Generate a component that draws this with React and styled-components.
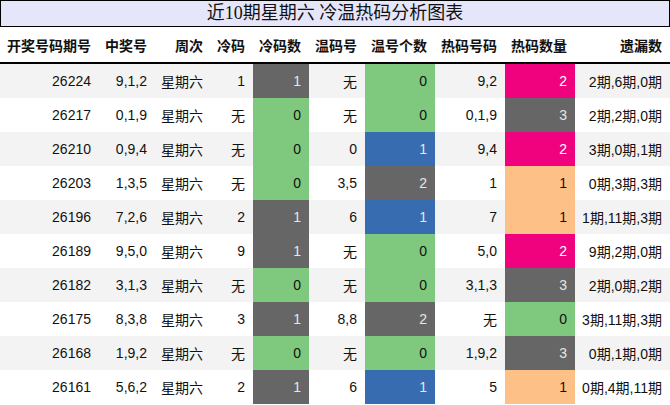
import React from "react";
import styled, { createGlobalStyle } from "styled-components";

const GlobalStyle = createGlobalStyle`
  html, body { margin: 0; padding: 0; background: #fff; }
  body { font-family: "Liberation Sans", "Noto Sans CJK SC", sans-serif; }
`;

const Wrap = styled.div`
  width: 670px;
`;

const Title = styled.div`
  height: 25px;
  border: 1px solid #000;
  background: #e6e6fa;
  font-family: "Liberation Serif", "Noto Sans CJK SC", serif;
  font-size: 18px;
  line-height: 25px;
  text-align: center;
  color: #111;
`;

const Table = styled.table`
  width: 670px;
  border-collapse: collapse;
  table-layout: fixed;
  font-size: 14px;
  color: #111;
`;

const Th = styled.th`
  height: 35px;
  padding: 0 8px 0 0;
  text-align: right;
  font-weight: bold;
  font-size: 14px;
  border-bottom: 2px solid #000;
  white-space: nowrap;
`;

const Row = styled.tr`
  height: 34px;
  background: ${(p) => (p.$odd ? "#f3f3f3" : "#fff")};
`;

const Td = styled.td`
  height: 34px;
  padding: 0 8px 0 0;
  text-align: right;
  white-space: nowrap;
  background: ${(p) => p.$bg || "transparent"};
  color: ${(p) => p.$fg || "#111"};
`;

const swatch = {
  green: { bg: "#7fc97f", fg: "#111" },
  gray: { bg: "#666666", fg: "#e6e6e6" },
  blue: { bg: "#386cb0", fg: "#e6e6e6" },
  pink: { bg: "#f0027f", fg: "#fff" },
  orange: { bg: "#fdc086", fg: "#111" },
};

const coldColor = { 0: "green", 1: "gray" };
const warmColor = { 0: "green", 1: "blue", 2: "gray" };
const hotColor = { 0: "green", 1: "orange", 2: "pink", 3: "gray" };

const cols = [
  ["开奖号码期号", 99],
  ["中奖号", 56],
  ["周次", 56],
  ["冷码", 42],
  ["冷码数", 56],
  ["温码号", 56],
  ["温号个数", 70],
  ["热码号码", 70],
  ["热码数量", 70],
  ["遗漏数", 95],
];

const rows = [
  ["26224", "9,1,2", "1", 1, "无", 0, "9,2", 2, "2期,6期,0期"],
  ["26217", "0,1,9", "无", 0, "无", 0, "0,1,9", 3, "2期,2期,0期"],
  ["26210", "0,9,4", "无", 0, "0", 1, "9,4", 2, "3期,0期,1期"],
  ["26203", "1,3,5", "无", 0, "3,5", 2, "1", 1, "0期,3期,3期"],
  ["26196", "7,2,6", "2", 1, "6", 1, "7", 1, "1期,11期,3期"],
  ["26189", "9,5,0", "9", 1, "无", 0, "5,0", 2, "9期,2期,0期"],
  ["26182", "3,1,3", "无", 0, "无", 0, "3,1,3", 3, "2期,0期,2期"],
  ["26175", "8,3,8", "3", 1, "8,8", 2, "无", 0, "3期,11期,3期"],
  ["26168", "1,9,2", "无", 0, "无", 0, "1,9,2", 3, "0期,1期,0期"],
  ["26161", "5,6,2", "2", 1, "6", 1, "5", 1, "0期,4期,11期"],
];

const Count = ({ value, map }) => {
  const s = swatch[map[value]];
  return (
    <Td $bg={s.bg} $fg={s.fg}>
      {value}
    </Td>
  );
};

export default function App() {
  return (
    <Wrap>
      <GlobalStyle />
      <Title>近10期星期六 冷温热码分析图表</Title>
      <Table>
        <colgroup>
          {cols.map(([name, w]) => (
            <col key={name} style={{ width: w }} />
          ))}
        </colgroup>
        <thead>
          <tr>
            {cols.map(([name]) => (
              <Th key={name}>{name}</Th>
            ))}
          </tr>
        </thead>
        <tbody>
          {rows.map((r, i) => (
            <Row key={r[0]} $odd={i % 2 === 0}>
              <Td>{r[0]}</Td>
              <Td>{r[1]}</Td>
              <Td>星期六</Td>
              <Td>{r[2]}</Td>
              <Count value={r[3]} map={coldColor} />
              <Td>{r[4]}</Td>
              <Count value={r[5]} map={warmColor} />
              <Td>{r[6]}</Td>
              <Count value={r[7]} map={hotColor} />
              <Td>{r[8]}</Td>
            </Row>
          ))}
        </tbody>
      </Table>
    </Wrap>
  );
}
